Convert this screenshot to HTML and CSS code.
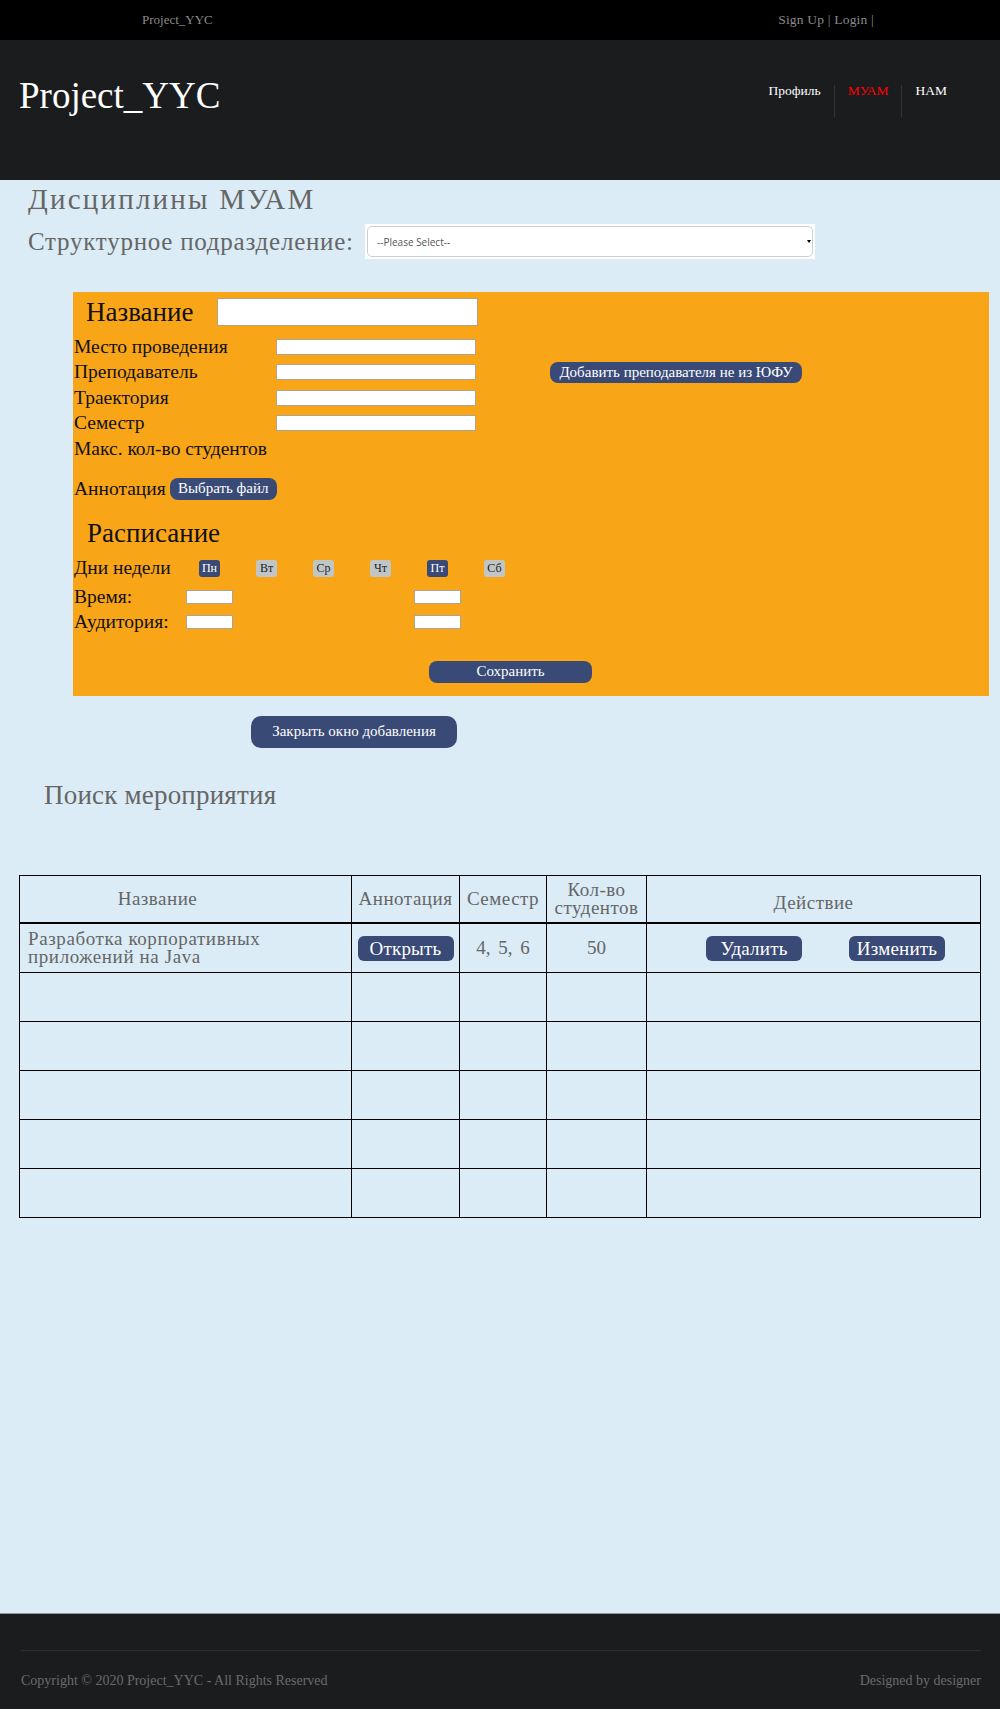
FILE: index.html
```html
<!DOCTYPE html>
<html lang="ru">
<head>
<meta charset="utf-8">
<title>Project_YYC</title>
<link rel="stylesheet" href="styles.css">
</head>
<body>
<div class="page">
  <div class="topbar">
    <span class="top-brand">Project_YYC</span>
    <span class="top-links">Sign Up | Login |</span>
  </div>
  <header class="header">
    <div class="logo">Project_YYC</div>
    <nav class="nav">
      <a class="nav-item">Профиль</a>
      <a class="nav-item nav-active">МУАМ</a>
      <a class="nav-item">НАМ</a>
    </nav>
  </header>

  <main class="main">
    <h1 class="page-title">Дисциплины МУАМ</h1>
    <div class="dept-row">
      <span class="dept-label">Структурное подразделение:</span>
      <div class="select">
        <span class="select-text">--Please Select--</span>
        <span class="select-arrow"></span>
      </div>
    </div>

    <section class="panel">
      <div class="title-row">
        <span class="panel-heading">Название</span>
        <input class="input-title" type="text">
      </div>
      <div class="field"><span class="label">Место проведения</span><input class="input-field" type="text"></div>
      <div class="field"><span class="label">Преподаватель</span><input class="input-field" type="text"><button class="btn btn-add">Добавить преподавателя не из ЮФУ</button></div>
      <div class="field"><span class="label">Траектория</span><input class="input-field" type="text"></div>
      <div class="field"><span class="label">Семестр</span><input class="input-field" type="text"></div>
      <div class="field"><span class="label">Макс. кол-во студентов</span></div>
      <div class="annot-row"><span class="label-inline">Аннотация</span><button class="btn btn-file">Выбрать файл</button></div>

      <div class="panel-heading sched-heading">Расписание</div>
      <div class="days-row">
        <span class="label-inline days-label">Дни недели</span>
        <span class="day day-on">Пн</span>
        <span class="day">Вт</span>
        <span class="day">Ср</span>
        <span class="day">Чт</span>
        <span class="day day-on">Пт</span>
        <span class="day">Сб</span>
      </div>
      <div class="time-row">
        <span class="label-inline time-label">Время:</span>
        <input class="input-small" type="text">
        <input class="input-small input-small-2" type="text">
      </div>
      <div class="time-row">
        <span class="label-inline time-label">Аудитория:</span>
        <input class="input-small" type="text">
        <input class="input-small input-small-2" type="text">
      </div>
      <button class="btn btn-save">Сохранить</button>
    </section>

    <button class="btn btn-close">Закрыть окно добавления</button>

    <h2 class="search-title">Поиск мероприятия</h2>

    <table class="events">
      <colgroup>
        <col class="c-name"><col class="c-annot"><col class="c-sem"><col class="c-count"><col class="c-act">
      </colgroup>
      <thead>
        <tr>
          <th class="th-name">Название</th>
          <th>Аннотация</th>
          <th>Семестр</th>
          <th>Кол-во<br>студентов</th>
          <th class="th-act">Действие</th>
        </tr>
      </thead>
      <tbody>
        <tr>
          <td class="td-name">Разработка корпоративных<br>приложений на Java</td>
          <td class="td-center"><button class="btn btn-table">Открыть</button></td>
          <td class="td-center td-sem">4, 5, 6</td>
          <td class="td-center">50</td>
          <td class="td-actions"><button class="btn btn-table btn-del">Удалить</button><button class="btn btn-table btn-edit">Изменить</button></td>
        </tr>
        <tr><td></td><td></td><td></td><td></td><td></td></tr>
        <tr><td></td><td></td><td></td><td></td><td></td></tr>
        <tr><td></td><td></td><td></td><td></td><td></td></tr>
        <tr><td></td><td></td><td></td><td></td><td></td></tr>
        <tr><td></td><td></td><td></td><td></td><td></td></tr>
      </tbody>
    </table>
  </main>

  <footer class="footer">
    <div class="footer-line"></div>
    <div class="footer-row">
      <span>Copyright © 2020 Project_YYC - All Rights Reserved</span>
      <span>Designed by designer</span>
    </div>
  </footer>
</div>
</body>
</html>
```

FILE: styles.css
```css
* { box-sizing: border-box; }

html, body {
  margin: 0;
  padding: 0;
}

body {
  font-family: "Liberation Serif", "Times New Roman", serif;
  background: #dbecf6;
}

.page {
  min-height: 1709px;
  display: flex;
  flex-direction: column;
}

/* top bar */
.topbar {
  height: 40px;
  background: #000;
  display: flex;
  align-items: center;
  justify-content: space-between;
  padding: 0 126px 0 142px;
  font-size: 13px;
  color: #8a8a8a;
}

.top-links {
  font-size: 13.5px;
  letter-spacing: 0.2px;
}

/* header */
.header {
  height: 140px;
  background: #1b1c1e;
  display: flex;
  justify-content: space-between;
  align-items: flex-start;
  padding-left: 19px;
}

.logo {
  color: #fff;
  font-size: 37px;
  line-height: 44px;
  margin-top: 34px;
}

.nav {
  display: flex;
  margin-top: 45px;
  margin-right: 40px;
}

.nav-item {
  height: 32px;
  padding: 0 13px;
  font-size: 13.5px;
  line-height: 12px;
  color: #fff;
}

.nav-item + .nav-item {
  border-left: 1px solid #313235;
}

.nav-active { color: #ff0000; }

/* main */
.main {
  flex: 1;
  background: #dbecf6;
}

.page-title {
  margin: 3px 0 0 28px;
  font-size: 29px;
  line-height: 32px;
  letter-spacing: 2.2px;
  font-weight: normal;
  color: #666;
}

.dept-row {
  display: flex;
  align-items: center;
  margin: 9px 0 0 28px;
}

.dept-label {
  width: 337px;
  font-size: 25px;
  letter-spacing: 0.75px;
  color: #666;
  white-space: nowrap;
}

.select {
  width: 450px;
  height: 35px;
  background: #fff;
  padding: 2px;
  display: flex;
  position: relative;
}

.select::before {
  content: "";
  position: absolute;
  inset: 2px;
  border: 1px solid #cfcfcf;
  border-radius: 5px;
}

.select-text {
  font-family: "Open Sans", sans-serif;
  font-size: 10px;
  color: #555;
  margin: auto 0 auto 10px;
}

.select-arrow {
  position: absolute;
  right: 4px;
  top: 16px;
  width: 0;
  height: 0;
  border-left: 2.5px solid transparent;
  border-right: 2.5px solid transparent;
  border-top: 3px solid #000;
}

/* panel */
.panel {
  margin: 33px 11px 0 73px;
  background: #f9a518;
  padding: 6px 0 13px 1px;
  color: #111;
}

.title-row {
  display: flex;
  align-items: center;
  height: 28px;
}

.panel-heading {
  font-size: 27px;
  line-height: 30px;
  margin-left: 12px;
  color: #111;
}

.input-title {
  width: 261px;
  height: 28px;
  margin: 0 0 0 24px;
  border: 1px solid #b5a37e;
  background: #fff;
}

.field {
  display: flex;
  align-items: center;
  height: 25.5px;
}

.title-row + .field { margin-top: 8px; }

.label {
  width: 202px;
  font-size: 19.5px;
}

.label-inline {
  font-size: 19.5px;
}

.input-field {
  width: 200px;
  height: 16px;
  margin: 0;
  border: 1px solid #b0a48e;
  background: #fff;
}

.btn {
  font-family: "Liberation Serif", "Times New Roman", serif;
  background: #394a76;
  color: #fff;
  border: none;
  border-radius: 8px;
  font-size: 15px;
  padding: 0;
  margin: 0;
}

.btn-add {
  width: 252px;
  height: 21px;
  margin-left: 74px;
}

.annot-row {
  display: flex;
  align-items: center;
  height: 22px;
  margin-top: 16px;
}

.btn-file {
  width: 107px;
  height: 22px;
  margin-left: 4px;
}

.sched-heading {
  margin-top: 18px;
  margin-left: 13px;
}

.days-row {
  display: flex;
  align-items: center;
  height: 25px;
  margin-top: 8px;
}

.days-label { width: 125px; }

.day {
  width: 21px;
  height: 17px;
  border-radius: 3px;
  background: #c0c6c7;
  color: #222;
  font-size: 12px;
  line-height: 17px;
  text-align: center;
  margin-right: 36px;
}

.day-on {
  background: #394a76;
  color: #fff;
}

.time-row {
  display: flex;
  align-items: center;
  height: 25px;
}

.days-row + .time-row { margin-top: 4px; }

.time-label { width: 112px; }

.input-small {
  width: 47px;
  height: 14px;
  margin: 0;
  border: 1px solid #b0a48e;
  background: #fff;
}

.input-small-2 { margin-left: 181px; }

.btn-save {
  display: block;
  width: 163px;
  height: 22px;
  margin: 26px 0 0 355px;
}

.btn-close {
  display: block;
  width: 206px;
  height: 32px;
  margin: 20px 0 0 251px;
  border-radius: 10px;
}

.search-title {
  margin: 32px 0 0 44px;
  font-size: 27px;
  line-height: 30px;
  letter-spacing: 0.2px;
  font-weight: normal;
  color: #666;
}

/* table */
.events {
  margin: 65px 0 0 19px;
  border-collapse: collapse;
  table-layout: fixed;
  width: 961px;
  color: #666;
}

.c-name { width: 332px; }
.c-annot { width: 108px; }
.c-sem { width: 87px; }
.c-count { width: 100px; }
.c-act { width: 334px; }

.events th, .events td {
  border: 1px solid #000;
  padding: 0;
  height: 49px;
}

.events th {
  height: 48px;
  font-weight: normal;
  font-size: 19px;
  letter-spacing: 0.5px;
  line-height: 18px;
  border-bottom: 2px solid #000;
}

.events th.th-name { padding-right: 56px; }

.events th.th-act { padding-top: 8px; }

.events td.td-name {
  font-size: 19px;
  letter-spacing: 0.6px;
  line-height: 18px;
  padding-left: 8px;
}

.td-center {
  text-align: center;
  font-size: 19px;
}

.td-sem { word-spacing: 3px; }

.btn-table {
  width: 96px;
  height: 25px;
  font-size: 19px;
  border-radius: 6px;
  letter-spacing: 0.2px;
  margin-top: 2px;
}

.events td.td-actions {
  padding-left: 59px;
}

.btn-edit { margin-left: 47px; }

/* footer */
.footer {
  height: 96px;
  background: #1b1c1e;
  border-top: 1px solid #8f9ca5;
  padding: 36px 19px 0 21px;
  color: #6b6b6b;
  font-size: 14px;
}

.footer-line {
  height: 1px;
  background: #2d2e31;
}

.footer-row {
  display: flex;
  justify-content: space-between;
  margin-top: 22px;
}
```
